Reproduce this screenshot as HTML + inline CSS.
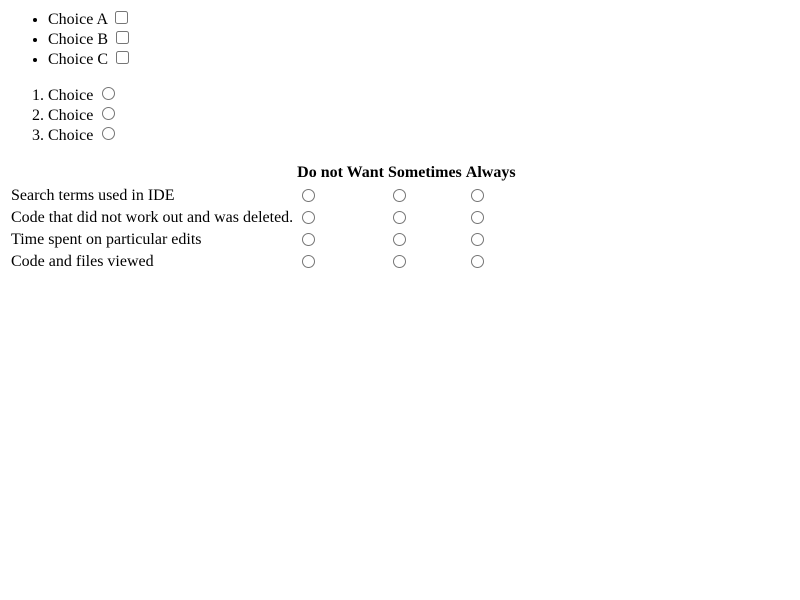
<!DOCTYPE html>
<html><head><meta charset="utf-8"><style>
body{margin:0;padding:8px;font-family:"Liberation Serif",serif;font-size:16px;color:#000;background:#fff}
ul,ol{margin:0 0 16px 0;padding-left:40px}
li{line-height:20px;height:20px}
table{margin-top:16px;border-spacing:2px}
th{padding:2px 1px 2px}
td{padding:0 1px;height:20px;line-height:20px}
td input{margin:0 3px 0 5px;vertical-align:-2px}
</style></head><body>
<ul>
<li>Choice A <input type="checkbox"></li>
<li>Choice B <input type="checkbox"></li>
<li>Choice C <input type="checkbox"></li>
</ul>
<ol>
<li>Choice <input type="radio" name="a"></li>
<li>Choice <input type="radio" name="a"></li>
<li>Choice <input type="radio" name="a"></li>
</ol>
<table>
<tr><th></th><th>Do not Want</th><th>Sometimes</th><th>Always</th></tr>
<tr><td>Search terms used in IDE</td><td><input type="radio" name="r1"></td><td><input type="radio" name="r1"></td><td><input type="radio" name="r1"></td></tr>
<tr><td>Code that did not work out and was deleted.</td><td><input type="radio" name="r2"></td><td><input type="radio" name="r2"></td><td><input type="radio" name="r2"></td></tr>
<tr><td>Time spent on particular edits</td><td><input type="radio" name="r3"></td><td><input type="radio" name="r3"></td><td><input type="radio" name="r3"></td></tr>
<tr><td>Code and files viewed</td><td><input type="radio" name="r4"></td><td><input type="radio" name="r4"></td><td><input type="radio" name="r4"></td></tr>
</table>
</body></html>
